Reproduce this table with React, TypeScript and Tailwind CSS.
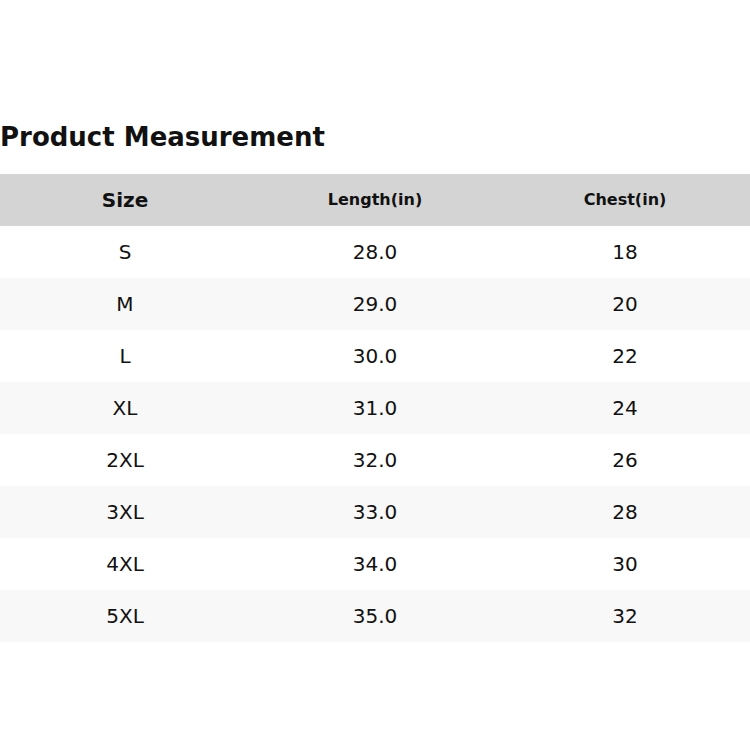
const rows = [
  { size: 'S', length: '28.0', chest: '18' },
  { size: 'M', length: '29.0', chest: '20' },
  { size: 'L', length: '30.0', chest: '22' },
  { size: 'XL', length: '31.0', chest: '24' },
  { size: '2XL', length: '32.0', chest: '26' },
  { size: '3XL', length: '33.0', chest: '28' },
  { size: '4XL', length: '34.0', chest: '30' },
  { size: '5XL', length: '35.0', chest: '32' },
]

export default function App() {
  return (
    <div className="h-[750px] w-[750px] bg-white pt-[122px] font-['DejaVu_Sans',sans-serif] text-[#111]">
      <h1 className="text-[26px] font-bold leading-[31px]">Product Measurement</h1>
      <table className="mt-[21px] w-full table-fixed border-collapse">
        <thead>
          <tr className="h-[52px] bg-[#d4d4d4]">
            <th className="text-[20px] font-bold">Size</th>
            <th className="text-[16px] font-bold">Length(in)</th>
            <th className="text-[16px] font-bold">Chest(in)</th>
          </tr>
        </thead>
        <tbody>
          {rows.map((r, i) => (
            <tr key={r.size} className={i % 2 === 0 ? 'h-[52px] bg-white' : 'h-[52px] bg-[#f8f8f8]'}>
              <td className="text-center text-[20px]">{r.size}</td>
              <td className="text-center text-[20px]">{r.length}</td>
              <td className="text-center text-[20px]">{r.chest}</td>
            </tr>
          ))}
        </tbody>
      </table>
    </div>
  )
}
